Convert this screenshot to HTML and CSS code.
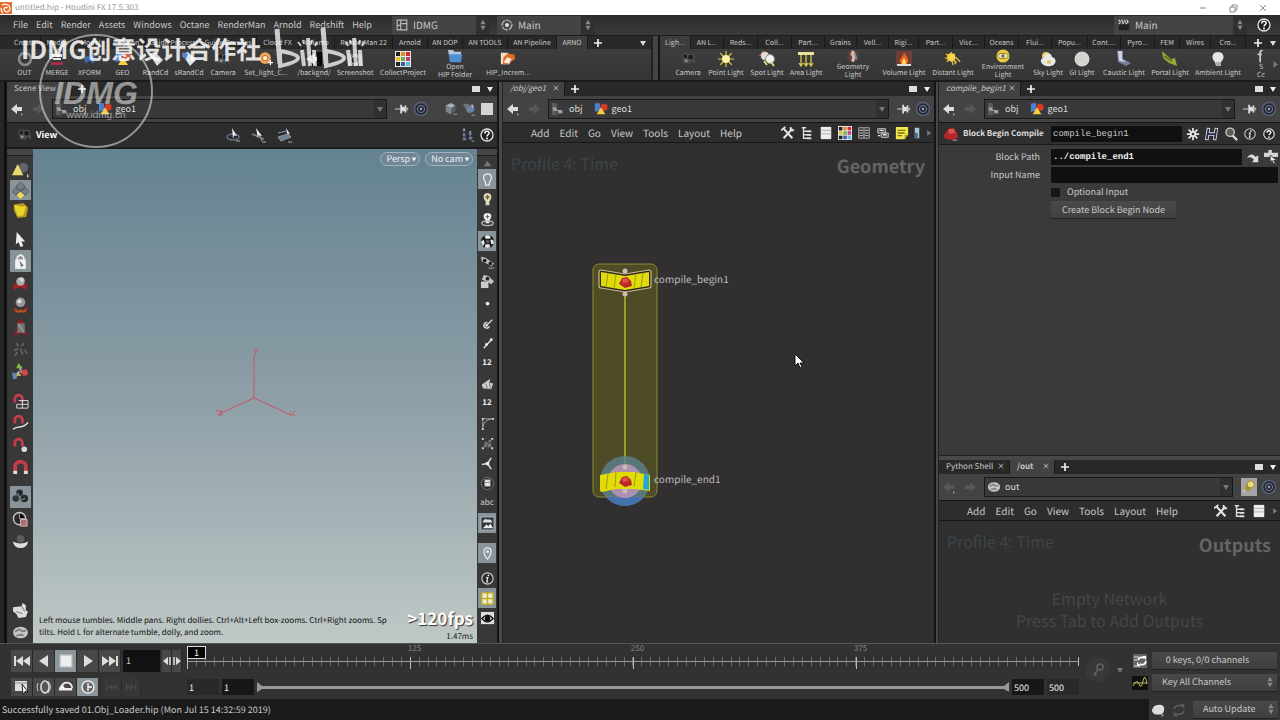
FILE: index.html
```
<!DOCTYPE html>
<html lang="en">
<head>
    <meta charset="UTF-8">
    <meta name="viewport" content="width=device-width, initial-scale=1.0">
    <title>untitled.hip - Houdini FX 17.5.303</title>
    <link rel="stylesheet" href="styles.css">
</head>
<body>
    <svg class="sprite" aria-hidden="true">
        <symbol id="logo" viewBox="0 0 12 12"><rect width="12" height="12" fill="#e8702f"/><path d="M2 3c4-2 8 0 8 3.500S6 11 4.500 8.500 6 4.500 7.500 6M1 6c0 2 1 4 2 5" fill="none" stroke="#fff" stroke-width="1.200"/></symbol>
        <symbol id="help" viewBox="0 0 16 16"><circle cx="8" cy="8" r="6" fill="#222" stroke="#e4e4e4" stroke-width="1.300"/><path d="M5.800 6.500c0-3 4.500-2.800 4.300-.3C10 7.800 8 7.600 8 9.500" fill="none" stroke="#fff" stroke-width="1.500"/><circle cx="8" cy="11.500" r="1" fill="#fff"/></symbol>
        <symbol id="info" viewBox="0 0 16 16"><circle cx="8" cy="8" r="6" fill="#2a2a2a" stroke="#ccc" stroke-width="1.200"/><path d="M6.500 7h1.800l-1 4.500h1.500" fill="none" stroke="#eee" stroke-width="1.300"/><circle cx="9" cy="4.700" r="1" fill="#eee"/></symbol>
        <symbol id="layout" viewBox="0 0 16 16"><path d="M2.500 2.500h11v11h-11zM6.500 2.500v11M2.500 8.500h4M6.500 6.500h7" fill="none" stroke="#bbb" stroke-width="1.300"/></symbol>
        <symbol id="target" viewBox="0 0 16 16"><circle cx="8" cy="8" r="5.500" fill="none" stroke="#bbb" stroke-width="1.300" stroke-dasharray="6 2.600"/><circle cx="8" cy="8" r="2.300" fill="#ddd"/><path d="M8 1v3M8 12v3M1 8h3M12 8h3" stroke="#bbb"/></symbol>
        <symbol id="clap" viewBox="0 0 16 16"><path d="M2 7h12v7H2z" fill="#222"/><path d="M2 2l2 3M5 2l2 3M8 2l2 3M11 2l2 3M2 7l2-2M6 7l2-2M10 7l2-2" stroke="#ddd" stroke-width="1.200"/></symbol>
        <symbol id="updown" viewBox="0 0 8 14"><path d="M4 1l3 5H1zM4 13l3-5H1z" fill="#888"/></symbol>
        <symbol id="plus" viewBox="0 0 10 10"><path d="M5 1v8M1 5h8" stroke="#eee" stroke-width="1.700"/></symbol>
        <symbol id="down" viewBox="0 0 10 10"><path d="M2 3h6L5 8z" fill="currentColor"/></symbol>
        <symbol id="right" viewBox="0 0 10 10"><path d="M3 1v8l6-4z" fill="currentColor"/></symbol>
        <symbol id="back" viewBox="0 0 16 16"><path d="M1 8l6-5v3h5v4H7v3z" fill="currentColor"/><path d="M11 12l2 1.500-2 1.500z" fill="#999"/></symbol>
        <symbol id="fwd" viewBox="0 0 16 16"><path d="M14 8L8 3v3H3v4h5v3z" fill="#575757"/></symbol>
        <symbol id="objnet" viewBox="0 0 16 16"><path d="M1 1h5l1 3v11H1z" fill="#5a5a5a"/><path d="M2 6h4v4H2zM8 9h5v4H8z" fill="#999"/><path d="M4 8l7 3" stroke="#bbb"/></symbol>
        <symbol id="geo" viewBox="0 0 16 16"><path d="M1 2c2-1 5-1 6 0v8l-6 1z" fill="#4b80cc"/><circle cx="11.500" cy="6" r="4" fill="#d83a25"/><path d="M8 6l5 8H3z" fill="#f3cf40"/></symbol>
        <symbol id="pin" viewBox="0 0 16 16"><path d="M0 8h6" stroke="#ddd"/><path d="M7 3v10M12 4v8" stroke="#ddd" stroke-width="2"/><path d="M7 5l5 1v4l-5 1z" fill="#ddd"/><path d="M12 8h3" stroke="#aaa" stroke-width="3"/></symbol>
        <symbol id="rings" viewBox="0 0 16 16"><circle cx="8" cy="8" r="6.500" fill="#23252e" stroke="#566078" stroke-width="1.500"/><circle cx="8" cy="8" r="3.600" fill="none" stroke="#7481a3"/><circle cx="8" cy="8" r="1.400" fill="#8592b5"/></symbol>
        <symbol id="cubes" viewBox="0 0 16 16"><path d="M2 4l6-3 5 3-5 3z" fill="#a8b0b8"/><path d="M2 4l6 3v7l-6-3z" fill="#7c858e"/><path d="M8 7l5-3v6l-5 4z" fill="#59616a"/><path d="M11 14h4" stroke="#aaa"/></symbol>
        <symbol id="bluecube" viewBox="0 0 16 16"><path d="M1 2h6l3 3v8l-4-1z" fill="#6b727c"/><circle cx="10" cy="8" r="4" fill="#6c83a8"/><path d="M10 3h3v5" fill="#b7bdc7"/><path d="M11 15h4" stroke="#aaa"/></symbol>
        <symbol id="flag" viewBox="0 0 14 14"><path d="M1 1h12v12H1z" fill="#d4d4d4"/></symbol>
        <symbol id="camera" viewBox="0 0 18 16"><circle cx="6" cy="5" r="3" fill="#222" stroke="#5d5d5d"/><circle cx="12" cy="6" r="3.500" fill="#1c1c1c" stroke="#666"/><path d="M3 8h9v5H4zM12 10l5-2v5z" fill="#4c4f52"/><circle cx="7" cy="10" r="1.500" fill="#999"/></symbol>
        <symbol id="orbit" viewBox="0 0 16 16"><ellipse cx="8" cy="10" rx="6" ry="3" fill="none" stroke="#65758a" stroke-width="1.500"/><path d="M7 1l5 8-3-.5L8 12z" fill="#e9e9e9"/><path d="M11 14h4" stroke="#aaa"/></symbol>
        <symbol id="pan" viewBox="0 0 16 16"><path d="M1 7l12 5M9 9l2 5" stroke="#7b8591" stroke-width="1.500"/><path d="M5 1l6 8-4-.5L7 12z" fill="#e9e9e9"/><path d="M11 15h4" stroke="#aaa"/></symbol>
        <symbol id="dolly" viewBox="0 0 16 16"><path d="M1 10l10-3 3 3-10 4zM1 6l8-2" fill="#708091" stroke="#8597a8"/><path d="M9 1l4 6-3-.5z" fill="#eee"/><path d="M11 15h4" stroke="#aaa"/></symbol>
        <symbol id="dots" viewBox="0 0 16 16"><path d="M2 2h3v2H2zM2 6h3v3H2zM2 11h4v3H2zM9 5h3v3H9zM9 10h4v3H9z" fill="#6578a8"/><path d="M3 1h1v1H3zM10 4h1v1h-1zM3 10h1M10 9h1" stroke="#ccc"/><path d="M12 15h3" stroke="#aaa"/></symbol>

        <symbol id="ring" viewBox="0 0 16 16"><circle cx="8" cy="8" r="6" fill="none" stroke="#8a8a8a" stroke-width="2.500"/></symbol>
        <symbol id="merge" viewBox="0 0 16 16"><path d="M3 3h10v3H3zM4 7h8v2H4z" fill="#e7e7e7"/><path d="M2 11h12v3H2z" fill="#9f3145"/></symbol>
        <symbol id="xform" viewBox="0 0 18 16"><path d="M2 7l5-3 2 3 4-4 3 5-4 5-3-3-5 3z" fill="#3e68a8"/></symbol>
        <symbol id="rand" viewBox="0 0 16 16"><path d="M1 3l6-2 8 8-6 6z" fill="#dadada"/><path d="M4 3l3 3 2-3" fill="#8c8c8c"/></symbol>
        <symbol id="srand" viewBox="0 0 16 16"><path d="M1 3l6-2 8 8-6 6z" fill="#dfe5ec"/><path d="M2 1l5 2-2 5-4-2z" fill="#4a86c8"/></symbol>
        <symbol id="setlight" viewBox="0 0 18 16"><circle cx="8" cy="7" r="6.500" fill="#f4a35c"/><circle cx="8" cy="7" r="3" fill="#fff0cf" stroke="#b65e24"/><path d="M14 9v6M11 12h6" stroke="#fff" stroke-width="1.300"/></symbol>
        <symbol id="bg" viewBox="0 0 16 16"><path d="M5 1h11v14H5z" fill="#090909"/><path d="M0 8l9-6v4h2v4H9v4z" fill="#ccc"/></symbol>
        <symbol id="shot" viewBox="0 0 16 16"><path d="M1 3h14v12H1z" fill="#787878"/><circle cx="8" cy="9" r="4" fill="#222" stroke="#aaa"/></symbol>
        <symbol id="palette" viewBox="0 0 16 16"><path d="M0 0h16v16H0z" fill="#e8e8e8"/><path d="M1 1h4v4H1zM1 11h4v4H1z" fill="#222"/><path d="M6 1h4v4H6z" fill="#e58b2a"/><path d="M11 1h4v4h-4z" fill="#d32c2c"/><path d="M1 6h4v4H1z" fill="#e5c237"/><path d="M6 6h4v4H6z" fill="#6bb643"/><path d="M11 6h4v4h-4z" fill="#bf3c88"/><path d="M6 11h4v4H6z" fill="#3a5da8"/><path d="M11 11h4v4h-4z" fill="#5fbad0"/></symbol>
        <symbol id="folder" viewBox="0 0 16 16"><path d="M0 1h6l1 2h8v4H1z" fill="#b4c6da"/><path d="M1 6h15l-1 9H2z" fill="#4f90d3"/></symbol>
        <symbol id="hip" viewBox="0 0 18 16"><path d="M1 1h7l3 2v11H1z" fill="#f1e1c9"/><path d="M4 6l4-4 8 1 1 5-8 6H3z" fill="#e56d26"/><path d="M4 12l4-6 5 2-3 5z" fill="#f8eee3"/></symbol>
        <symbol id="sun" viewBox="0 0 18 18"><path d="M9 0v18M0 9h18M2.500 2.500l13 13M15.500 2.500l-13 13" stroke="#dcc54e" stroke-width="1.300"/><circle cx="9" cy="9" r="4.500" fill="#fff2a4"/></symbol>
        <symbol id="spot" viewBox="0 0 16 16"><path d="M0 5l4-5 4 1 2 5" fill="#cb7942"/><circle cx="6" cy="5" r="4" fill="#ddd"/><circle cx="11" cy="8" r="4.500" fill="#f1f1ec" stroke="#888"/><path d="M5 10l3 4M12 11l3 4" stroke="#e8d76a" stroke-width="2"/></symbol>
        <symbol id="area" viewBox="0 0 16 16"><path d="M0 1h16v3H0z" fill="#eee4a0"/><path d="M3 4v10M8 4v10M13 4v10M1 12l2 3 2-3M6 12l2 3 2-3M11 12l2 3 2-3" stroke="#d9c751" fill="none" stroke-width="1.300"/></symbol>
        <symbol id="geolight" viewBox="0 0 16 16"><circle cx="8" cy="8" r="7" fill="#704d42" opacity=".5"/><path d="M7 1l3 2 1 6-2 6-3-1 1-5-2-3z" fill="#e1b49a"/><path d="M10 5l2 7" stroke="#6c8fc2" stroke-width="2"/></symbol>
        <symbol id="fire" viewBox="0 0 16 16"><path d="M0 0h16v14H0z" fill="#84422f" opacity=".7"/><path d="M8 1c1 4 5 5 4 10-1 4-7 4-8 0C3 7 8 6 8 1z" fill="#f06325"/><path d="M8 7c3 4 2 6 0 7-3-1-2-4 0-7z" fill="#ffe26b"/><path d="M1 14h14" stroke="#ddd" stroke-width="2"/></symbol>
        <symbol id="distant" viewBox="0 0 18 16"><path d="M1 2l12 10M7 0v11M0 7h12M2 11l9-9" stroke="#f1bc35" stroke-width="1.500"/><circle cx="7" cy="6" r="4.500" fill="#fad34b"/><path d="M10 8l2 6M12 6l5 5M8 10l1 5" stroke="#e0bf42" stroke-width="1.500"/></symbol>
        <symbol id="envl" viewBox="0 0 16 16"><circle cx="8" cy="8" r="7.500" fill="#e8c940"/><ellipse cx="8" cy="8" rx="6" ry="3" fill="#fff0a0" stroke="#8f7827"/><circle cx="8" cy="8" r="2" fill="#4e6f9c"/></symbol>
        <symbol id="sky" viewBox="0 0 16 16"><circle cx="6" cy="5" r="4" fill="#e8cf62"/><path d="M1 11a3 3 0 013-4 4 4 0 018-1 4 4 0 013 6c-2 5-12 4-14-1z" fill="#e8e8e8"/><circle cx="9" cy="11" r="2" fill="#e3c950"/></symbol>
        <symbol id="gi" viewBox="0 0 16 16"><circle cx="8" cy="8" r="7.500" fill="#d4d4d0"/></symbol>
        <symbol id="caustic" viewBox="0 0 16 16"><path d="M1 0h6v8l8 4-5 3-8-4z" fill="#767e98"/><path d="M2 0h4v8l4 3-7-1z" fill="#ccd2e5"/></symbol>
        <symbol id="portal" viewBox="0 0 16 16"><path d="M0 0l9 8 4-1 2 8-8-3-6-5z" fill="#95a936"/><path d="M2 5l8 5" stroke="#5f7327" stroke-width="2"/></symbol>
        <symbol id="bulb" viewBox="0 0 16 16"><path d="M5 11C0 6 3 1 8 1s8 5 3 10v4H6z" fill="currentColor"/><path d="M6 12h5M6 14h5" stroke="#777"/></symbol>
        <symbol id="cut" viewBox="0 0 8 16"><path d="M3 15V5q0-4 3-3M0 6h5" fill="none" stroke="#c8c8c8" stroke-width="2"/></symbol>

        <symbol id="shapes" viewBox="0 0 18 18"><circle cx="12" cy="6" r="5" fill="#63636c"/><path d="M6 2l6 12H0z" fill="#eadb6a"/><path d="M16 12v5l2-2z" fill="#ccc"/></symbol>
        <symbol id="diamond" viewBox="0 0 18 18"><path d="M9 0l5 5-5 4-5-4zM4 6l5 4-5 4-4-4zM14 6l4 4-4 4-5-4z" fill="#747f89" stroke="#4e565e"/><path d="M9 10l4 4-4 4-4-4z" fill="#eedc57"/></symbol>
        <symbol id="yellowcube" viewBox="0 0 18 18"><path d="M2 3l10-2 5 5-2 10-9 1-4-8z" fill="#b89b18"/><path d="M2 3l8 2 5-1-3 10-6 1z" fill="#e8d52f"/></symbol>
        <symbol id="cursor" viewBox="0 0 16 18"><path d="M4 1l9 10H9l2 5-3 1-2-5-3 2z" fill="#ededed"/></symbol>
        <symbol id="lock" viewBox="0 0 16 16"><path d="M3 6h10v9H3z" fill="#f1f1f1"/><path d="M5 7V4q3-4 6 0v3" fill="none" stroke="#f1f1f1" stroke-width="1.500"/><path d="M7 7l4 5-2 .5v2z" fill="#606870"/></symbol>
        <symbol id="move" viewBox="0 0 16 16"><path d="M1 9l6-1 8 1-2 5-5-3-6 3z" fill="#a72125"/><circle cx="8" cy="6" r="4" fill="#aaa"/><path d="M6 3l4-1 2 3-3 2z" fill="#d4d4d4"/></symbol>
        <symbol id="rotate" viewBox="0 0 16 16"><path d="M1 10l4 1-2 3zM14 9l-3 2 3 3z" fill="#a72125"/><path d="M3 12q3 3 5 1 4 2 5-1" fill="none" stroke="#bd5020" stroke-width="2"/><circle cx="8" cy="5" r="4.500" fill="#999"/><circle cx="7" cy="4" r="2" fill="#ddd"/></symbol>
        <symbol id="scale" viewBox="0 0 16 16"><path d="M8 0l4 4H4zM1 15l4-6 2 5zM15 15l-4-6-2 5z" fill="#971b22"/><path d="M5 4h7v9H5z" fill="#777"/><path d="M6 5l5 7" stroke="#aaa"/></symbol>
        <symbol id="dim" viewBox="0 0 16 16"><path d="M4 2l2 3M11 2L9 5M2 9l4-2M8 7l2 6M5 10l-2 4M12 8l2 4" stroke="#686868" stroke-width="1.500"/></symbol>
        <symbol id="handles" viewBox="0 0 16 16"><path d="M8 7V3M7 8l-4 4M8 8l5 2" stroke="#aaa" stroke-width="2"/><path d="M6 0l4 5H4z" fill="#7abf43"/><path d="M0 9l6 1-2 5H1z" fill="#6a83b5"/><circle cx="12" cy="9" r="3" fill="#cf4545"/><path d="M6 9l3 3H4z" fill="#d4c74e"/></symbol>
        <symbol id="magnet" viewBox="0 0 16 16"><path d="M3 14V7c0-6 10-6 10 0v7" fill="none" stroke="#c53b4a" stroke-width="3.500"/><path d="M1.200 11h3.600v3H1.200zM11.200 11h3.600v3h-3.600z" fill="#ddd"/></symbol>
        <symbol id="maggrid" viewBox="0 0 18 18"><path d="M3 10V6c0-5 8-5 8 0v4" fill="none" stroke="#c53b4a" stroke-width="3"/><path d="M7 8h10v8H5v-4M11 8v8M5 12h12" fill="none" stroke="#ddd"/></symbol>
        <symbol id="magcurve" viewBox="0 0 18 18"><path d="M3 9V5c0-5 8-5 8 0v4" fill="none" stroke="#c53b4a" stroke-width="3"/><path d="M1 15c7-5 9 1 16-7" fill="none" stroke="#ddd" stroke-width="1.500"/></symbol>
        <symbol id="magpoint" viewBox="0 0 18 18"><path d="M3 10V6c0-5 8-5 8 0v4" fill="none" stroke="#c53b4a" stroke-width="3"/><circle cx="13" cy="13" r="3" fill="#d7d7d7"/></symbol>
        <symbol id="rig" viewBox="0 0 18 18"><circle cx="8" cy="4" r="3.500" fill="#23282c"/><circle cx="4" cy="10" r="3.500" fill="#303539"/><circle cx="13" cy="10" r="4" fill="#252a2e"/><path d="M6 4l3 8 5-2" stroke="#777" fill="none" stroke-width="1.500"/></symbol>
        <symbol id="viewbox" viewBox="0 0 18 18"><circle cx="8" cy="8" r="6.500" fill="#292929" stroke="#c5c5c5" stroke-width="1.500"/><path d="M8 2v6h6" stroke="#aaa"/><path d="M9 9h7v7H9z" fill="#a57178" stroke="#ddb2b6"/></symbol>
        <symbol id="dish" viewBox="0 0 18 18"><circle cx="9" cy="6" r="4" fill="#5d5d5d"/><path d="M1 9q8 4 16 0-1 7-8 7T1 9z" fill="#dedede"/></symbol>
        <symbol id="hand" viewBox="0 0 16 16"><path d="M1 5l8-1 1-3 3 2v5l2 1-2 5-7 1-2-4-3-2z" fill="#ddd"/><path d="M9 4l3 5M4 9l6 2" stroke="#888"/></symbol>
        <symbol id="globe" viewBox="0 0 16 16"><ellipse cx="8" cy="8" rx="7" ry="5.500" fill="#c4c4c4"/><path d="M3 7l4-2 3 2 3-1M4 11l5-1 2 1" stroke="#777" fill="none" stroke-width="1.500"/></symbol>

        <symbol id="up" viewBox="0 0 16 16"><path d="M8 5l4 6H4z" fill="#777"/></symbol>
        <symbol id="lamp" viewBox="0 0 16 16"><path d="M6 11C2 6 4 2 8 2s6 4 2 9v3H6z" fill="none" stroke="#eee" stroke-width="1.200"/></symbol>
        <symbol id="lampplus" viewBox="0 0 16 16"><path d="M6 10C2 5 4 1 8 1s6 4 2 9v4H6z" fill="#e4ddb6"/><path d="M8 3v5M5.500 5.500h5" stroke="#65603f" stroke-width="1.500"/></symbol>
        <symbol id="lampring" viewBox="0 0 16 16"><path d="M6 9C2 4 4 1 8 1s6 3 2 8v3H6z" fill="#eee"/><path d="M8 3v4M6 5h4" stroke="#555"/><ellipse cx="8" cy="12" rx="6" ry="2.500" fill="none" stroke="#bbb" stroke-width="1.500"/></symbol>
        <symbol id="checker" viewBox="0 0 16 16"><circle cx="8" cy="8" r="7" fill="#17191a"/><path d="M5 2l3-1 3 1v3H6zM1 8l3-2 1 4-2 3zM11 6l3 0 1 4-3 1zM6 11h4l1 3-3 1-3-1z" fill="#e8e8e8"/><circle cx="8" cy="8" r="2" fill="#555"/></symbol>
        <symbol id="goggles" viewBox="0 0 16 16"><path d="M1 3l5 1 9 6-3 3-5-3-5-2z" fill="#b9c0c2"/><circle cx="5" cy="7" r="2" fill="#222"/><circle cx="11" cy="10" r="2" fill="#222"/><path d="M9 15h6" stroke="#aaa"/></symbol>
        <symbol id="gogglock" viewBox="0 0 16 16"><path d="M4 1l5 1 6 6-3 3-5-3-5-2z" fill="#c2c2c2"/><circle cx="8" cy="5" r="2" fill="#222"/><path d="M1 8h8v7H1z" fill="#ccc"/></symbol>
        <symbol id="dot" viewBox="0 0 16 16"><circle cx="8" cy="8" r="2" fill="#eee"/></symbol>
        <symbol id="normal" viewBox="0 0 16 16"><path d="M7 10l6-6" stroke="#ddd" stroke-width="1.500"/><path d="M8 7a3 3 0 102 4" fill="none" stroke="#ddd" stroke-width="1.500"/><circle cx="7" cy="10" r="1.500" fill="#ddd"/></symbol>
        <symbol id="vec" viewBox="0 0 16 16"><path d="M4 13l8-9" stroke="#ddd" stroke-width="1.500"/><circle cx="12" cy="4" r="1.500" fill="#eee"/><circle cx="7" cy="9" r="1.500" fill="#eee"/></symbol>
        <symbol id="prim" viewBox="0 0 16 16"><path d="M2 9l9-6-1 4 4 1-2 6-9-1z" fill="#ccc"/><path d="M6 8l2 5M10 7l1 7" stroke="#777"/></symbol>
        <symbol id="corner" viewBox="0 0 16 16"><path d="M3 14V3h11M3 12q1-7 9-9" fill="none" stroke="#aaa"/><path d="M2 2h2v2H2zM2 13h2v2H2zM13 2h2v2h-2z" fill="#ddd"/></symbol>
        <symbol id="lattice" viewBox="0 0 16 16"><path d="M2 2h2v2H2zM12 2h2v2h-2zM2 12h2v2H2zM12 12h2v2h-2z" fill="#ddd"/><path d="M5 6h3v3H5zM9 4h3v3H9zM8 8h4v4H8zM4 9h3v3H4z" fill="#777"/></symbol>
        <symbol id="tri" viewBox="0 0 16 16"><path d="M8 8l4-6M8 8L2 9M8 8l4 6" stroke="#ddd" stroke-width="1.500"/><circle cx="8" cy="8" r="2" fill="#eee"/></symbol>
        <symbol id="book" viewBox="0 0 16 16"><circle cx="8" cy="8" r="6.500" fill="#2a2a2a" stroke="#777"/><path d="M5 4h6v7H5zM5 7h6" fill="#eee" stroke="#888"/></symbol>
        <symbol id="image" viewBox="0 0 16 16"><path d="M1 1h14v14H1z" fill="#2f3538" stroke="#b4bcc0"/><path d="M3 13l4-4 2 2 2-3 3 5z" fill="#eee"/><path d="M3 6c2-4 4-3 5-2 4-1 5 1 5 3H3z" fill="#ddd"/></symbol>
        <symbol id="place" viewBox="0 0 16 16"><path d="M8 14C3 8 3 2 8 2s5 6 0 12z" fill="none" stroke="#eee" stroke-width="1.300"/><circle cx="8" cy="6" r="1.500" fill="#eee"/></symbol>
        <symbol id="quad" viewBox="0 0 16 16"><path d="M2 2h12v12H2z" fill="#eeebd0"/><path d="M2 2h12v12H2zM8 2v12M2 8h12" fill="none" stroke="#c4ac20" stroke-width="1.500"/></symbol>
        <symbol id="eye" viewBox="0 0 16 16"><path d="M1 1h14v13H1z" fill="#ddd"/><path d="M2 8q6-7 12 0-6 7-12 0z" fill="#eee" stroke="#111" stroke-width="1.500"/><circle cx="8" cy="8" r="3" fill="#111"/></symbol>

        <symbol id="tools" viewBox="0 0 16 16"><path d="M3 3l10 11M13 3L3 14" stroke="#e4e4e4" stroke-width="2.400"/><path d="M0 5l5-4M11 1v4h4" stroke="#e4e4e4" stroke-width="2" fill="none"/></symbol>
        <symbol id="tree" viewBox="0 0 16 16"><path d="M2 2h5M4 2v12h8M4 6h8M4 10h8" fill="none" stroke="#ddd" stroke-width="1.500"/><path d="M8 5h5v2H8zM8 9h5v2H8zM8 13h5v2H8z" fill="#ddd"/></symbol>
        <symbol id="list" viewBox="0 0 16 16"><path d="M2 1h12v14H2z" fill="#eee"/><path d="M2 5h12M2 9h12" stroke="#aaa"/></symbol>
        <symbol id="table" viewBox="0 0 16 16"><path d="M2 2h12v12H2zM8 2v12" fill="#333" stroke="#bbb"/><path d="M3 5h4M3 8h4M3 11h4M9 5h4M9 8h4M9 11h4" stroke="#ddd"/></symbol>
        <symbol id="cards" viewBox="0 0 16 16"><path d="M2 3h9v5H2zM6 8h8v5H6z" fill="#555" stroke="#ccc"/><path d="M4 5h5M8 10h4M2 11h3" stroke="#ddd" stroke-width="1.500"/></symbol>
        <symbol id="note" viewBox="0 0 16 16"><path d="M1 1h14v9l-4 5H1z" fill="#f3e84a"/><path d="M3 5h9M3 8h8M3 11h5" stroke="#806f1b" stroke-width="1.500"/><path d="M15 10h-4v5z" fill="#a99b30"/></symbol>
        <symbol id="stripe" viewBox="0 0 8 16"><path d="M1 1h6v14H1z" fill="#a9c4d4"/><path d="M1 8h4v7H1z" fill="#4d6e8b"/></symbol>
        <symbol id="redblock" viewBox="0 0 18 16"><path d="M1 9l5-7 6-1 4 6 1 5-5 3-7-1-4-2z" fill="#b3262b"/><path d="M6 3l6-1 2 5-7 1z" fill="#dc5552"/><path d="M11 15h5" stroke="#aaa"/></symbol>
        <symbol id="gear" viewBox="0 0 16 16"><path d="M8 1v14M1 8h14M3 3l10 10M13 3L3 13" stroke="#e6e6e6" stroke-width="2"/><circle cx="8" cy="8" r="3.500" fill="#e6e6e6"/><circle cx="8" cy="8" r="1.500" fill="#333"/></symbol>
        <symbol id="hbook" viewBox="0 0 16 16"><path d="M4 1L2 15M13 1l-2 14M3 8h9" fill="none" stroke="#dfe4f2" stroke-width="4"/><path d="M4 2L2 14M13 2l-2 12M3 8h9" fill="none" stroke="#252a49" stroke-width="2"/></symbol>
        <symbol id="search" viewBox="0 0 16 16"><circle cx="7" cy="6" r="4.800" fill="#5a5a5a" stroke="#ccc" stroke-width="1.500"/><path d="M10 10l5 5" stroke="#ddd" stroke-width="2.500"/></symbol>
        <symbol id="jump" viewBox="0 0 16 16"><path d="M1 9q5-7 10-1l3-2v8H7l2-3q-3-4-8-2z" fill="#ddd"/></symbol>
        <symbol id="picker" viewBox="0 0 16 16"><path d="M0 3h16v5H0zM5 0h4v3H5z" fill="#d3d3d3"/><path d="M7 6l8 6h-4l2 3-2 1-2-4-2 2z" fill="#eee" stroke="#333"/></symbol>
        <symbol id="goldpin" viewBox="0 0 16 16"><path d="M1 14l5-5" stroke="#eee"/><circle cx="7" cy="9" r="3.500" fill="#a8962c"/><circle cx="10" cy="5" r="4" fill="#eedf72" stroke="#8f802c"/></symbol>

        <symbol id="first" viewBox="0 0 18 12"><path d="M2 1v10" stroke="currentColor" stroke-width="2"/><path d="M10 1v10L3 6zM17 1v10l-7-5z" fill="currentColor"/></symbol>
        <symbol id="prev" viewBox="0 0 12 12"><path d="M10 0v12L1 6z" fill="currentColor"/></symbol>
        <symbol id="stop" viewBox="0 0 12 12"><path d="M1 1h10v10H1z" fill="#eee" stroke="#c3c8ca"/></symbol>
        <symbol id="play" viewBox="0 0 12 12"><path d="M2 0v12l9-6z" fill="currentColor"/></symbol>
        <symbol id="last" viewBox="0 0 18 12"><path d="M16 1v10" stroke="currentColor" stroke-width="2"/><path d="M1 1v10l7-5zM8 1v10l7-5z" fill="currentColor"/></symbol>
        <symbol id="stepb" viewBox="0 0 8 10"><path d="M5 1v8L0 5z" fill="#ddd"/><path d="M7 1v8" stroke="#ddd" stroke-width="1.500"/></symbol>
        <symbol id="stepf" viewBox="0 0 8 10"><path d="M3 1v8l5-4z" fill="#ddd"/><path d="M1 1v8" stroke="#ddd" stroke-width="1.500"/></symbol>
        <symbol id="scope" viewBox="0 0 16 16"><path d="M1 2h12v10H1z" fill="#ddd"/><path d="M1 4h12" stroke="#888"/><path d="M8 5l6 8-3-.5-2 3z" fill="#fff" stroke="#222"/></symbol>
        <symbol id="sound" viewBox="0 0 16 16"><ellipse cx="9" cy="8" rx="4" ry="6" fill="#555" stroke="#ddd" stroke-width="1.500"/><path d="M5 5v6M2 4q-2 4 0 8M12 2q5 6 0 12" stroke="#ccc" fill="none"/></symbol>
        <symbol id="loop" viewBox="0 0 18 16"><path d="M3 9q2-6 7-6t6 6" fill="none" stroke="#eee" stroke-width="2"/><path d="M1 12h15V9H8L5 5 1 9z" fill="#eee"/><path d="M7 9q3-3 6 0z" fill="#484848"/></symbol>
        <symbol id="clock" viewBox="0 0 16 16"><circle cx="8" cy="8" r="6" fill="#666" stroke="#eee" stroke-width="1.500"/><path d="M8 4v8M8 8h4" stroke="#fff" stroke-width="1.300"/></symbol>
        <symbol id="key" viewBox="0 0 16 16"><circle cx="10" cy="5" r="3" fill="none" stroke="#626262" stroke-width="1.500"/><path d="M8 7l-4 7M4 11l3 2" stroke="#626262" stroke-width="1.500"/></symbol>
        <symbol id="keycycle" viewBox="0 0 16 16"><path d="M1 1h14v14H1z" fill="#666"/><path d="M2 4h5M2 7h3M2 13h6" stroke="#ddd"/><path d="M6 7q2-4 6-2M14 8q-1 5-6 3" fill="none" stroke="#fff" stroke-width="1.800"/><path d="M10 3h4v4zM9 13H5V9z" fill="#fff"/></symbol>
        <symbol id="curve" viewBox="0 0 16 16"><path d="M0 1h16v14H0z" fill="#101010"/><path d="M1 8h14" stroke="#aaa"/><path d="M1 11q4-8 6-2t4-3 4 3" fill="none" stroke="#c9bd3b"/></symbol>
        <symbol id="brain" viewBox="0 0 16 16"><path d="M1 9q1-7 8-7t6 6-6 5q-6 1-8-4z" fill="#ddd"/><path d="M12 12l3 2-3 2z" fill="#999"/></symbol>
        <symbol id="refresh" viewBox="0 0 16 16"><path d="M2 7q3-6 9-3M14 9q-3 6-9 3" fill="none" stroke="#5a5a5a" stroke-width="2"/><path d="M9 1h5v6zM7 15H2V9z" fill="#5a5a5a"/></symbol>
    </svg>

    <header class="titlebar">
        <svg class="ic12"><use href="#logo"/></svg>
        <span>untitled.hip - Houdini FX 17.5.303</span>
        <div class="window-buttons">
            <button aria-label="Minimize"><svg viewBox="0 0 10 10"><path d="M2 5h6"/></svg></button>
            <button aria-label="Restore"><svg viewBox="0 0 10 10"><path d="M2 4h5v5H2zM4 4V2h5v5H7"/></svg></button>
            <button aria-label="Close"><svg viewBox="0 0 10 10"><path d="M2 2l6 6M8 2L2 8"/></svg></button>
        </div>
    </header>

    <nav class="menubar">
        <div class="menus">
            <button>File</button><button>Edit</button><button>Render</button><button>Assets</button><button>Windows</button><button>Octane</button><button>RenderMan</button><button>Arnold</button><button>Redshift</button><button>Help</button>
        </div>
        <label class="desk"><svg class="ic14"><use href="#layout"/></svg><select aria-label="Desktop"><option>IDMG</option></select><svg class="updown"><use href="#updown"/></svg></label>
        <label class="desk"><svg class="ic14"><use href="#target"/></svg><select aria-label="Radial menu"><option>Main</option></select><svg class="updown"><use href="#updown"/></svg></label>
        <label class="desk take"><svg class="ic14"><use href="#clap"/></svg><select aria-label="Take"><option>Main</option></select><svg class="updown"><use href="#updown"/></svg></label>
        <button class="plain" aria-label="Help"><svg class="ic16"><use href="#help"/></svg></button>
    </nav>

    <section class="shelves">
        <div class="shelf">
            <div class="shelf-tabs tabs-a">
                <button>Create</button><button>Modify</button><button>Model</button><button>Polygon</button><button>Guide Process</button><button>Guide Brushes</button><button>Cloud FX</button><button>Volume</button><button>RenderMan 22</button><button>Arnold</button><button>AN DOP</button><button>AN TOOLS</button><button>AN Pipeline</button><button class="on">ARNO</button>
                <button class="add" aria-label="Add shelf"><svg class="ic10"><use href="#plus"/></svg></button>
                <button class="end" aria-label="Shelf menu"><svg class="ic10"><use href="#down"/></svg></button>
            </div>
            <div class="shelf-tools tools-a">
                <button><svg><use href="#ring"/></svg>OUT</button>
                <button><svg><use href="#merge"/></svg>MERGE</button>
                <button><svg><use href="#xform"/></svg>XFORM</button>
                <button><svg><use href="#geo"/></svg>GEO</button>
                <button><svg><use href="#rand"/></svg>RandCd</button>
                <button><svg><use href="#srand"/></svg>sRandCd</button>
                <button><svg><use href="#camera"/></svg>Camera</button>
                <button><svg><use href="#setlight"/></svg>Set_light_C...</button>
                <button><svg><use href="#bg"/></svg>/backgnd/</button>
                <button><svg><use href="#shot"/></svg>Screenshot</button>
                <button><svg><use href="#palette"/></svg>CollectProject</button>
                <button class="two"><svg><use href="#folder"/></svg>Open<br>HIP Folder</button>
                <button><svg><use href="#hip"/></svg>HIP_Increm...</button>
            </div>
        </div>
        <div class="shelf-grip"></div>
        <div class="shelf">
            <div class="shelf-tabs tabs-b">
                <button class="on">Ligh...</button><button>AN L...</button><button>Reds...</button><button>Coll...</button><button>Part...</button><button>Grains</button><button>Vell...</button><button>Rigi...</button><button>Part...</button><button>Visc...</button><button>Oceans</button><button>Flui...</button><button>Popu...</button><button>Cont....</button><button>Pyro...</button><button>FEM</button><button>Wires</button><button>Cro...</button>
                <button class="add" aria-label="Add shelf"><svg class="ic10"><use href="#plus"/></svg></button>
                <button class="end" aria-label="Shelf menu"><svg class="ic10"><use href="#down"/></svg></button>
            </div>
            <div class="shelf-tools tools-b">
                <button><svg><use href="#camera"/></svg>Camera</button>
                <button><svg><use href="#sun"/></svg>Point Light</button>
                <button><svg><use href="#spot"/></svg>Spot Light</button>
                <button><svg><use href="#area"/></svg>Area Light</button>
                <button class="two"><svg><use href="#geolight"/></svg>Geometry<br>Light</button>
                <button><svg><use href="#fire"/></svg>Volume Light</button>
                <button><svg><use href="#distant"/></svg>Distant Light</button>
                <button class="two"><svg><use href="#envl"/></svg>Environment<br>Light</button>
                <button><svg><use href="#sky"/></svg>Sky Light</button>
                <button><svg><use href="#gi"/></svg>GI Light</button>
                <button><svg><use href="#caustic"/></svg>Caustic Light</button>
                <button><svg><use href="#portal"/></svg>Portal Light</button>
                <button><svg class="white"><use href="#bulb"/></svg>Ambient Light</button>
                <button class="two"><svg><use href="#cut"/></svg>S<br>Cc</button>
                <button class="more" aria-label="More tools"><svg><use href="#right"/></svg></button>
            </div>
        </div>
    </section>

    <main class="desktop">
        <section class="pane">
            <div class="pane-tabs">
                <button class="on scene-tab">Scene View</button>
                <button class="add" aria-label="Add tab"><svg class="ic10"><use href="#plus"/></svg></button>
                <span class="pane-ctl"><i></i><svg class="ic10"><use href="#down"/></svg></span>
            </div>
            <div class="pathbar">
                <button class="plain" aria-label="Back"><svg class="ic16"><use href="#back"/></svg></button>
                <button class="plain" aria-label="Forward"><svg class="ic16"><use href="#fwd"/></svg></button>
                <div class="path"><a href="#obj"><svg class="ic14"><use href="#objnet"/></svg>obj</a><a href="#geo1"><svg class="ic14"><use href="#geo"/></svg>geo1</a><button aria-label="Path history"><svg class="ic10"><use href="#down"/></svg></button></div>
                <button class="plain" aria-label="Pin"><svg class="ic14"><use href="#pin"/></svg></button>
                <button class="plain" aria-label="Link"><svg class="ic16"><use href="#rings"/></svg></button>
                <button class="plain gap" aria-label="Shading"><svg class="ic14"><use href="#cubes"/></svg></button>
                <button class="plain" aria-label="Objects"><svg class="ic14"><use href="#bluecube"/></svg></button>
                <button class="plain" aria-label="Layout"><svg class="ic14"><use href="#flag"/></svg></button>
            </div>
            <div class="viewbar">
                <svg class="ic16"><use href="#camera"/></svg><b>View</b>
                <div class="viewbar-mid">
                    <button class="plain" aria-label="Tumble"><svg class="ic16"><use href="#orbit"/></svg></button>
                    <button class="plain" aria-label="Pan"><svg class="ic16"><use href="#pan"/></svg></button>
                    <button class="plain" aria-label="Dolly"><svg class="ic16"><use href="#dolly"/></svg></button>
                </div>
                <button class="plain" aria-label="Options"><svg class="ic14"><use href="#dots"/></svg></button>
                <button class="plain" aria-label="Help"><svg class="ic16"><use href="#help"/></svg></button>
            </div>
            <div class="scene">
                <div class="tools-left">
                    <span class="strip"></span>
                    <button class="s20" aria-label="Objects"><svg><use href="#shapes"/></svg></button>
                    <button class="s20 on" aria-label="Components"><svg><use href="#diamond"/></svg></button>
                    <button class="s20" aria-label="Dynamics"><svg><use href="#yellowcube"/></svg></button>
                    <button class="sp" aria-label="Select"><svg><use href="#cursor"/></svg></button>
                    <button class="on" aria-label="Secure selection"><svg><use href="#lock"/></svg></button>
                    <button aria-label="Move"><svg><use href="#move"/></svg></button>
                    <button aria-label="Rotate"><svg><use href="#rotate"/></svg></button>
                    <button aria-label="Scale"><svg><use href="#scale"/></svg></button>
                    <button aria-label="Pose"><svg><use href="#dim"/></svg></button>
                    <button aria-label="Handles"><svg><use href="#handles"/></svg></button>
                    <button class="sp" aria-label="Grid snap"><svg><use href="#maggrid"/></svg></button>
                    <button aria-label="Curve snap"><svg><use href="#magcurve"/></svg></button>
                    <button aria-label="Point snap"><svg><use href="#magpoint"/></svg></button>
                    <button aria-label="Snap"><svg><use href="#magnet"/></svg></button>
                    <button class="sp on" aria-label="View tool"><svg><use href="#rig"/></svg></button>
                    <button aria-label="Render region"><svg><use href="#viewbox"/></svg></button>
                    <button aria-label="Flipbook"><svg><use href="#dish"/></svg></button>
                    <button class="push" aria-label="Inspect"><svg><use href="#hand"/></svg></button>
                    <button aria-label="Snapshot"><svg><use href="#globe"/></svg></button>
                </div>
                <div class="viewport">
                    <div class="view-menus"><button>Persp<svg class="ic10"><use href="#down"/></svg></button><button>No cam<svg class="ic10"><use href="#down"/></svg></button></div>
                    <svg class="axis" viewBox="0 0 82 72"><path d="M39 51V7M39 51L4 67M39 51l37 17" fill="none" stroke="#cc5360"/><path d="M39 1l2 4 2-4M41 5l-1 3M1 64h6l-4 4h5M75 64l5 5M80 64l-5 5" fill="none" stroke="#cc5360"/></svg>
                    <p class="hint">Left mouse tumbles. Middle pans. Right dollies. Ctrl+Alt+Left box-zooms. Ctrl+Right zooms. Sp<br>tilts. Hold L for alternate tumble, dolly, and zoom.</p>
                    <div class="fps">&gt;120fps</div>
                    <div class="ms">1.47ms</div>
                </div>
                <div class="tools-right">
                    <span class="strip"></span>
                    <button class="small" aria-label="Scroll up"><svg><use href="#up"/></svg></button>
                    <button class="on" aria-label="Lighting"><svg><use href="#lamp"/></svg></button>
                    <button aria-label="Headlight"><svg><use href="#lampplus"/></svg></button>
                    <button aria-label="Shadows"><svg><use href="#lampring"/></svg></button>
                    <button class="g2 on" aria-label="Materials"><svg><use href="#checker"/></svg></button>
                    <button aria-label="Display options"><svg><use href="#goggles"/></svg></button>
                    <button aria-label="Lock display"><svg><use href="#gogglock"/></svg></button>
                    <button class="g2" aria-label="Points"><svg><use href="#dot"/></svg></button>
                    <button aria-label="Point normals"><svg><use href="#normal"/></svg></button>
                    <button aria-label="Point trails"><svg><use href="#vec"/></svg></button>
                    <button aria-label="Point numbers"><b>12</b></button>
                    <button aria-label="Primitive normals"><svg><use href="#prim"/></svg></button>
                    <button aria-label="Primitive numbers"><b>12</b></button>
                    <button aria-label="Hulls"><svg><use href="#corner"/></svg></button>
                    <button aria-label="Lattice"><svg><use href="#lattice"/></svg></button>
                    <button aria-label="Vectors"><svg><use href="#tri"/></svg></button>
                    <button aria-label="Groups"><svg><use href="#book"/></svg></button>
                    <button>abc</button>
                    <button class="on" aria-label="Background"><svg><use href="#image"/></svg></button>
                    <button class="g10 on" aria-label="Origin"><svg><use href="#place"/></svg></button>
                    <button class="g5" aria-label="Info"><svg><use href="#info"/></svg></button>
                    <button class="on" aria-label="Grid"><svg><use href="#quad"/></svg></button>
                    <button aria-label="Visualize"><svg><use href="#eye"/></svg></button>
                </div>
            </div>
        </section>

        <div class="divider"></div>

        <section class="pane">
            <div class="pane-tabs">
                <button class="on w60"><em>/obj/geo1</em><span>×</span></button>
                <button class="add" aria-label="Add tab"><svg class="ic10"><use href="#plus"/></svg></button>
                <span class="pane-ctl"><i></i><svg class="ic10"><use href="#down"/></svg></span>
            </div>
            <div class="pathbar">
                <button class="plain" aria-label="Back"><svg class="ic16"><use href="#back"/></svg></button>
                <button class="plain" aria-label="Forward"><svg class="ic16"><use href="#fwd"/></svg></button>
                <div class="path"><a href="#obj"><svg class="ic14"><use href="#objnet"/></svg>obj</a><a href="#geo1"><svg class="ic14"><use href="#geo"/></svg>geo1</a><button aria-label="Path history"><svg class="ic10"><use href="#down"/></svg></button></div>
                <button class="plain" aria-label="Pin"><svg class="ic14"><use href="#pin"/></svg></button>
                <button class="plain" aria-label="Link"><svg class="ic16"><use href="#rings"/></svg></button>
            </div>
            <div class="netmenu">
                <button>Add</button><button>Edit</button><button>Go</button><button>View</button><button>Tools</button><button>Layout</button><button>Help</button>
                <div class="net-icons">
                    <svg class="ic14"><use href="#tools"/></svg><svg class="ic14"><use href="#tree"/></svg><svg class="ic14"><use href="#list"/></svg><svg class="ic14"><use href="#palette"/></svg><svg class="ic14"><use href="#table"/></svg><svg class="ic14"><use href="#cards"/></svg><svg class="ic14"><use href="#note"/></svg><svg class="thin"><use href="#stripe"/></svg><svg class="arrow"><use href="#right"/></svg>
                </div>
            </div>
            <div class="network">
                <span class="profile">Profile 4: Time</span>
                <span class="context">Geometry</span>
                <svg class="graph" viewBox="0 0 70 248">
                    <rect x="3" y="3" width="64" height="233" rx="6" fill="#4e4c27" stroke="#8b8d2c"/>
                    <path d="M35 33v172" stroke="#b7b92e" stroke-width="1.500"/>
                    <circle cx="35" cy="220" r="25" fill="#5d8291" opacity=".8"/>
                    <path d="M16 236h38a25 25 0 01-38 0z" fill="#4571b0"/>
                    <circle cx="35" cy="220" r="17" fill="#ad8fae"/>
                    <path d="M11 9l24 4 24-4q2 0 2 2v14q0 2-2 2l-24 4-24-4q-2 0-2-2V11q0-2 2-2z" fill="#2f2c20" stroke="#d3b88d" stroke-width="1.200"/>
                    <path d="M11 11l24 4 24-4v14l-24 4-24-4z" fill="#e1dc08"/>
                    <path d="M18 12l-2 14M26 14l-2 13M46 13l-2 14M53 12l-2 14" stroke="#9c9b12"/>
                    <path d="M10 214l16-3h18l16 3v16l-16-2H26l-14 3q-2 0-2-2z" fill="#e1dc08"/>
                    <path d="M18 212l-2 16M26 211l-1 15M46 211l-2 15" stroke="#9c9b12"/>
                    <path d="M54 213l5 1v15l-6-1z" fill="#23a7d4"/>
                    <path d="M29 23l3-6 5-1 4 4 1 5-7 2zM29 222l3-6 5-1 4 4 1 5-7 2z" fill="#b8272a"/>
                    <path d="M32 18l5-1 2 4-6 1zM32 217l5-1 2 4-6 1z" fill="#df5146"/>
                    <g fill="#c9bdb7"><circle cx="35" cy="10" r="2.500"/><circle cx="35" cy="33" r="2.500"/><circle cx="35" cy="206" r="2.500"/><circle cx="35" cy="230" r="2.500"/></g>
                </svg>
                <span class="node-name begin">compile_begin1</span>
                <span class="node-name finish">compile_end1</span>
                <svg class="pointer" viewBox="0 0 10 16"><path d="M1 1v12l3-3 2 5 2-1-2-4h4z" fill="#fff" stroke="#111"/></svg>
            </div>
        </section>

        <div class="divider"></div>

        <div class="right-col">
            <section class="pane params">
                <div class="pane-tabs">
                    <button class="on w80"><em>compile_begin1</em><span>×</span></button>
                    <button class="add" aria-label="Add tab"><svg class="ic10"><use href="#plus"/></svg></button>
                    <span class="pane-ctl"><i></i><svg class="ic10"><use href="#down"/></svg></span>
                </div>
                <div class="pathbar">
                    <button class="plain" aria-label="Back"><svg class="ic16"><use href="#back"/></svg></button>
                    <button class="plain" aria-label="Forward"><svg class="ic16"><use href="#fwd"/></svg></button>
                    <div class="path"><a href="#obj"><svg class="ic14"><use href="#objnet"/></svg>obj</a><a href="#geo1"><svg class="ic14"><use href="#geo"/></svg>geo1</a><button aria-label="Path history"><svg class="ic10"><use href="#down"/></svg></button></div>
                    <button class="plain" aria-label="Pin"><svg class="ic14"><use href="#pin"/></svg></button>
                    <button class="plain" aria-label="Link"><svg class="ic16"><use href="#rings"/></svg></button>
                </div>
                <div class="param-head">
                    <svg class="ic16"><use href="#redblock"/></svg>
                    <label for="node-name">Block Begin Compile</label>
                    <input id="node-name" value="compile_begin1">
                    <div class="head-icons">
                        <button class="plain" aria-label="Settings"><svg class="ic14"><use href="#gear"/></svg></button>
                        <button class="plain" aria-label="Houdini"><svg class="ic14"><use href="#hbook"/></svg></button>
                        <button class="plain" aria-label="Search"><svg class="ic14"><use href="#search"/></svg></button>
                        <button class="plain" aria-label="Info"><svg class="ic14"><use href="#info"/></svg></button>
                        <button class="plain" aria-label="Help"><svg class="ic14"><use href="#help"/></svg></button>
                    </div>
                </div>
                <form class="param-form">
                    <label for="block-path">Block Path</label>
                    <div class="field"><input id="block-path" class="bold" value="../compile_end1"><svg class="ic14"><use href="#jump"/></svg><svg class="ic14"><use href="#picker"/></svg></div>
                    <label for="input-name">Input Name</label>
                    <div class="field"><input id="input-name" value=""></div>
                    <span></span>
                    <label class="check"><input type="checkbox">Optional Input</label>
                    <span></span>
                    <button type="button" class="create">Create Block Begin Node</button>
                </form>
            </section>
            <div class="hdivider"></div>
            <section class="pane outputs">
                <div class="pane-tabs">
                    <button class="w70">Python Shell<span>×</span></button>
                    <button class="on w45"><b>/out</b><span>×</span></button>
                    <button class="add" aria-label="Add tab"><svg class="ic10"><use href="#plus"/></svg></button>
                    <span class="pane-ctl"><i></i><svg class="ic10"><use href="#down"/></svg></span>
                </div>
                <div class="pathbar">
                    <button class="plain dimmed" aria-label="Back"><svg class="ic16"><use href="#back"/></svg></button>
                    <button class="plain" aria-label="Forward"><svg class="ic16"><use href="#fwd"/></svg></button>
                    <div class="path"><a href="#out"><svg class="ic14"><use href="#globe"/></svg>out</a><button aria-label="Path history"><svg class="ic10"><use href="#down"/></svg></button></div>
                    <button class="plain pinned" aria-label="Pin"><svg class="ic14"><use href="#goldpin"/></svg></button>
                    <button class="plain" aria-label="Link"><svg class="ic16"><use href="#rings"/></svg></button>
                </div>
                <div class="netmenu">
                    <button>Add</button><button>Edit</button><button>Go</button><button>View</button><button>Tools</button><button>Layout</button><button>Help</button>
                    <div class="net-icons"><svg class="ic14"><use href="#tools"/></svg><svg class="ic14"><use href="#tree"/></svg><svg class="ic14"><use href="#list"/></svg><svg class="arrow"><use href="#right"/></svg></div>
                </div>
                <div class="network">
                    <span class="profile">Profile 4: Time</span>
                    <span class="context">Outputs</span>
                    <p class="empty">Empty Network<br>Press Tab to Add Outputs</p>
                </div>
            </section>
        </div>
    </main>

    <section class="timeline">
        <div class="transport">
            <div class="btns">
                <button aria-label="First frame"><svg class="wide"><use href="#first"/></svg></button>
                <button aria-label="Play backward"><svg class="ic12"><use href="#prev"/></svg></button>
                <button class="on" aria-label="Stop"><svg class="ic14"><use href="#stop"/></svg></button>
                <button aria-label="Play"><svg class="ic12"><use href="#play"/></svg></button>
                <button aria-label="Last frame"><svg class="wide"><use href="#last"/></svg></button>
                <input class="frame" value="1" aria-label="Current frame">
                <button class="step" aria-label="Step back"><svg class="thin"><use href="#stepb"/></svg></button>
                <button class="step" aria-label="Step forward"><svg class="thin"><use href="#stepf"/></svg></button>
            </div>
            <div class="btns low">
                <button aria-label="Scope"><svg class="ic16"><use href="#scope"/></svg></button>
                <button aria-label="Audio"><svg class="ic16"><use href="#sound"/></svg></button>
                <button aria-label="Loop"><svg class="ic16"><use href="#loop"/></svg></button>
                <button class="on" aria-label="Real time"><svg class="ic16"><use href="#clock"/></svg></button>
                <button class="off" aria-label="Previous key" disabled><svg class="ic12"><use href="#first"/></svg></button>
                <button class="off" aria-label="Next key" disabled><svg class="ic12"><use href="#last"/></svg></button>
            </div>
        </div>
        <div class="track">
            <div class="ruler">
                <div class="ticks"></div>
                <div class="majors"></div>
                <span class="mark m1">125</span><span class="mark m2">250</span><span class="mark m3">375</span>
                <span class="now">1</span>
            </div>
            <div class="range">
                <input value="1" aria-label="Global start">
                <input class="dark" value="1" aria-label="Range start">
                <div class="bar"></div>
                <input class="dark" value="500" aria-label="Range end">
                <input value="500" aria-label="Global end">
            </div>
        </div>
        <div class="keyctl">
            <button class="keybtn" aria-label="Set key"><svg class="ic16"><use href="#key"/></svg></button>
            <button class="plain" aria-label="Key menu"><svg class="ic10"><use href="#down"/></svg></button>
        </div>
        <div class="channels">
            <svg class="ic16"><use href="#keycycle"/></svg>
            <button>0 keys, 0/0 channels</button>
            <svg class="ic16"><use href="#curve"/></svg>
            <label class="sel"><select aria-label="Key mode"><option>Key All Channels</option></select><svg class="updown"><use href="#updown"/></svg></label>
        </div>
    </section>

    <footer class="status">
        <span>Successfully saved 01.Obj_Loader.hip (Mon Jul 15 14:32:59 2019)</span>
        <div class="update">
            <svg class="ic14"><use href="#brain"/></svg><svg class="ic14"><use href="#refresh"/></svg>
            <label class="sel"><select aria-label="Update mode"><option>Auto Update</option></select><svg class="updown"><use href="#updown"/></svg></label>
        </div>
    </footer>

    <div class="watermark">
        <div class="wm-title">IDMG创意设计合作社</div>
        <div class="wm-badge"><strong>IDMG</strong><span>www.idmg.cn</span></div>
        <svg class="wm-bili" viewBox="0 0 92 44" fill="none" stroke="#fff"><path d="M3 2l3 35M49 1l3 36" stroke-width="5"/><path d="M6 24q18 3 18 7t-18 8zM52 24q18 3 18 7t-18 8z" stroke-width="4"/><path d="M28 23l2 16M34 11l2 28M40 23l1 16M74 23l2 16M80 11l2 28M86 23l1 16" stroke-width="4"/><path d="M24 15l3 4M29 13l1 4M38 13l-1 4M43 15l-2 4M72 15l2 4M76 13l1 4M86 13l-1 4M90 15l-2 4" stroke-width="2"/></svg>
    </div>
</body>
</html>
```
FILE: styles.css
```
* { box-sizing: border-box; }

body {
    margin: 0;
    min-height: 100vh;
    display: flex;
    flex-direction: column;
    position: relative;
    overflow: hidden;
    background: #2b2b2b;
    color: #c8c8c8;
    font-family: 'Noto Sans CJK SC', 'Noto Sans', sans-serif;
    font-size: 9px;
    line-height: 14px;
    text-rendering: geometricPrecision;
}

button, input, select {
    font: inherit;
    color: inherit;
    background: none;
    border: 0;
    border-radius: 0;
    padding: 0;
    margin: 0;
    outline: 0;
    text-rendering: inherit;
}
select { appearance: none; flex: 1; min-width: 0; }
input { min-width: 0; }
a { color: inherit; text-decoration: none; }
svg { display: block; flex: none; }
button { white-space: nowrap; }

.sprite { position: absolute; width: 0; height: 0; }
.ic10 { width: 10px; height: 10px; }
.ic12 { width: 12px; height: 12px; }
.ic14 { width: 14px; height: 14px; }
.ic16 { width: 16px; height: 16px; }
.arrow { width: 7px; height: 8px; }
.thin { width: 8px; height: 14px; }
.wide { width: 18px; height: 12px; }
.updown { width: 8px; height: 12px; }
.plain { display: flex; color: #ddd; }
.plain.dimmed { color: #575757; }

/* title bar */
.titlebar {
    height: 15px;
    display: flex;
    align-items: center;
    gap: 3px;
    background: #fff;
    color: #999;
    font-size: 8px;
}
.window-buttons { margin-left: auto; display: flex; gap: 20px; padding-right: 12px; }
.window-buttons svg { width: 10px; height: 10px; fill: none; stroke: #888; }

/* main menu */
.menubar {
    height: 21px;
    display: flex;
    align-items: center;
    padding-right: 8px;
    background: linear-gradient(#2c2c2c, #3a3a3a);
    border-bottom: 1px solid #1c1c1c;
}
.menus { display: flex; gap: 8px; width: 392px; padding-left: 13px; }
.desk {
    display: flex;
    align-items: center;
    gap: 4px;
    width: 98px;
    height: 19px;
    margin-right: 7px;
    padding: 0 3px;
    background: linear-gradient(90deg, #444 84px, #303030 84px);
    font-size: 10px;
}
.desk.take { width: 133px; margin: 0 9px 0 auto; background: linear-gradient(90deg, #444 119px, #303030 119px); }

/* shelves */
.shelves {
    height: 46px;
    display: grid;
    grid-template-columns: 651fr 9px 620fr;
    font-size: 7px;
    border-bottom: 2px solid #1b1b1b;
    overflow: hidden;
}
.shelf { background: #3d3d3d; min-width: 0; overflow: hidden; }
.shelf-tabs { display: grid; height: 13px; background: #292929; line-height: 12px; }
.shelf-tabs button { border-right: 1px solid #191919; overflow: hidden; }
.shelf-tabs .on { background: #3d3d3d; }
.shelf-tabs .add, .shelf-tabs .end { border: 0; display: grid; place-items: center; color: #ddd; }
.shelf-tabs .end { justify-content: end; }
.tabs-a { padding: 0 3px 0 9px; grid-template-columns: 32px 34px 32px 39px 54px 57px 42px 36px 58px 35px 35px 45px 49px 31px 20px 1fr; }
.tabs-b { padding-right: 2px; grid-template-columns: 31px 33px 34px 34px 33px 32px 32px 30px 34px 32px 34px 33px 36px 33px 34px 25px 31px 35px 24px 1fr; }
.shelf-tools { display: grid; height: 31px; background: linear-gradient(#3d3d3d, #353535); }
.shelf-tools button {
    display: flex;
    flex-direction: column;
    align-items: center;
    min-width: 0;
    padding-top: 2px;
    line-height: 13px;
}
.shelf-tools svg { width: 16px; height: 16px; }
.shelf-tools .white { color: #e5e5e5; }
.shelf-tools .two { line-height: 8px; padding: 0; }
.shelf-tools .two svg { height: 14px; }
.shelf-tools .more { padding-top: 11px; color: #777; }
.shelf-tools .more svg { width: 8px; height: 9px; }
.tools-a { padding-left: 8px; grid-template-columns: 33px 32px 33px 33px 33px 34px 34px 52px 44px 38px 58px 46px 60px; }
.tools-b { padding-left: 8px; grid-template-columns: 40px 36px 46px 32px 62px 40px 58px 42px 48px 20px 64px 28px 68px 18px 1fr; }
.shelf-grip { background: #444; border-right: 2px solid #151515; border-left: 2px solid #222; }

/* desktop panes */
.desktop {
    flex: 1;
    min-height: 0;
    display: grid;
    grid-template-columns: 490fr 6px 431fr 5px 341fr;
    padding-left: 7px;
    background: linear-gradient(90deg, #262626 4px, #111 4px);
}
.divider { background: #484848; border-left: 2px solid #151515; border-right: 1px solid #222; }
.pane { display: flex; flex-direction: column; min-width: 0; background: #3a3a3a; }
.pane-tabs {
    height: 14px;
    display: flex;
    background: #292929;
    font-size: 8px;
    line-height: 13px;
}
.pane-tabs button { display: flex; justify-content: space-between; padding: 0 4px 0 7px; border-right: 1px solid #1a1a1a; }
.pane-tabs .on { background: #424242; }
.pane-tabs .add { border: 0; padding: 2px 5px; }
.scene-tab { width: 65px; }
.w60 { width: 62px; }
.w80 { width: 82px; }
.w70 { width: 71px; }
.w45 { width: 45px; }
.pane-ctl { display: flex; align-items: center; gap: 5px; margin-left: auto; padding-right: 2px; color: #eee; }
.pane-ctl i { width: 8px; height: 6px; background: #ddd; }
.pathbar {
    height: 27px;
    display: flex;
    align-items: center;
    gap: 4px;
    padding: 0 3px;
    background: #434343;
    border-bottom: 1px solid #151515;
}
.path {
    flex: 1;
    height: 20px;
    display: flex;
    align-items: center;
    margin: 0 4px 0 2px;
    background: #393939;
    border: 1px solid #191919;
    color: #ddd;
}
.path a { display: flex; align-items: center; gap: 4px; padding: 0 9px 0 2px; }
.path button { margin-left: auto; padding: 4px 1px; color: #777; background: #303030; }
.gap { margin-left: 11px; }
.pinned { padding: 2px 1px; background: #a4a4a4; }
.viewbar { height: 26px; display: flex; align-items: center; gap: 4px; padding: 0 2px 0 9px; background: #2d2d2d; border-bottom: 2px solid #1c1c1c; color: #fff; }
.viewbar-mid { display: flex; gap: 10px; margin: 0 auto; }

/* scene view */
.scene { flex: 1; min-height: 0; display: flex; background: #383838; }
.tools-left { width: 26px; display: flex; flex-direction: column; align-items: center; }
.tools-left button { height: 22px; width: 21px; display: grid; place-items: center; }
.tools-left button.s20 { height: 20px; }
.tools-left svg { width: 17px; height: 17px; }
.tools-left .s20:nth-child(2) { margin-top: 4px; }
.tools-left .sp { margin-top: 8px; }
.tools-left .push { margin-top: auto; }
.tools-left .on, .tools-right .on { background: #89939a; }
.strip { height: 7px; width: 100%; background: #454545; border-bottom: 1px solid #1c1c1c; }
.tools-right { width: 20px; display: flex; flex-direction: column; align-items: center; }
.tools-right button { height: 20px; width: 18px; flex: none; display: grid; place-items: center; color: #ccc; font-size: 8px; }
.tools-right svg { width: 15px; height: 15px; }
.tools-right .small { height: 13px; }
.tools-right .g2 { margin-top: 2px; }
.tools-right .g5 { margin-top: 5px; }
.tools-right .g10 { margin-top: 10px; }
.tools-right b { color: #eee; }
.viewport {
    flex: 1;
    position: relative;
    background: linear-gradient(#648290, #8fa0a8 52%, #bfc8c6);
}
.view-menus { display: flex; justify-content: flex-end; gap: 5px; padding: 3px 4px 0; }
.view-menus button { display: flex; align-items: center; height: 14px; padding: 0 1px 0 5px; color: #eee; border: 1px solid #a3b2ba; border-radius: 7px; background: #6f8795; line-height: 12px; }
.view-menus svg { width: 8px; height: 8px; }
.axis { position: absolute; width: 82px; height: 72px; left: 41%; top: 40%; }
.hint { position: absolute; left: 6px; bottom: 4px; margin: 0; color: #111; font-size: 8px; line-height: 12px; white-space: nowrap; }
.fps { position: absolute; right: 4px; bottom: 15px; color: #fff; font-size: 17px; line-height: 20px; font-weight: 700; text-shadow: 1px 1px 1px #333; }
.ms { position: absolute; right: 4px; bottom: 0; color: #222; font-size: 8px; line-height: 12px; }

/* network editors */
.netmenu {
    height: 20px;
    display: flex;
    align-items: center;
    gap: 10px;
    padding: 0 2px 0 28px;
    background: #2d2d2d;
    border-bottom: 1px solid #171717;
    font-size: 10px;
}
.net-icons { display: flex; align-items: center; gap: 5px; margin-left: auto; color: #777; }
.net-icons .thin { width: 6px; }
.network { flex: 1; position: relative; background: #312f30; overflow: hidden; }
.profile { position: absolute; left: 8px; top: 8px; font-size: 16px; line-height: 24px; color: #3a4649; }
.context { position: absolute; right: 9px; top: 11px; font-size: 18px; line-height: 24px; font-weight: 700; color: #656565; }
.graph { position: absolute; left: 87px; top: 118px; width: 70px; height: 248px; }
.node-name { position: absolute; left: 151px; font-size: 10px; line-height: 16px; color: #bdbdbd; }
.begin { top: 128px; }
.finish { top: 328px; }
.pointer { position: absolute; left: 291px; top: 210px; width: 10px; height: 16px; }

/* parameters */
.right-col { display: flex; flex-direction: column; min-width: 0; }
.params { flex: 374; }
.outputs { flex: 183; }
.hdivider { height: 5px; background: #484848; border-top: 1px solid #222; }
.param-head { height: 22px; display: flex; align-items: center; gap: 4px; padding: 0 4px; background: #2f2f2f; border-bottom: 1px solid #1a1a1a; }
.param-head label { font-size: 8px; font-weight: 700; width: 84px; white-space: nowrap; color: #ddd; }
.param-head input { flex: 1; background: #101010; }
.param-head input, .field input { height: 16px; padding: 0 2px; font-family: 'Liberation Mono', 'DejaVu Sans Mono', monospace; font-size: 9px; }
.head-icons { display: flex; gap: 5px; }
.param-form {
    display: grid;
    grid-template-columns: 101px 1fr;
    gap: 2px 11px;
    padding: 4px 2px 0 0;
    align-items: center;
}
.param-form > label:not(.check) { text-align: right; }
.field { display: flex; align-items: center; gap: 4px; }
.field input { flex: 1; background: #101010; }
.field .bold { font-weight: 700; color: #eee; }
.check { display: flex; align-items: center; gap: 7px; }
.check input { appearance: none; width: 9px; height: 9px; background: #161616; }
.create { justify-self: start; width: 125px; height: 18px; background: linear-gradient(#4a4a4a, #404040); border-bottom: 1px solid #222; }
.outputs .context { top: 12px; }
.empty { margin: 66px 0 0; text-align: center; font-size: 16px; line-height: 22px; color: #464646; }

/* playbar */
.timeline {
    height: 56px;
    display: flex;
    padding: 0 3px 0 11px;
    background: #323232;
    border-top: 1px solid #555;
}
.transport { width: 176px; padding-top: 6px; }
.btns { display: flex; height: 22px; }
.btns button { width: 22px; display: grid; place-items: center; background: #484848; border-right: 1px solid #292929; color: #ddd; }
.btns .on { background: #8c979c; }
.btns .frame { width: 37px; margin: 0 2px; padding: 0 3px; background: #111; }
.btns button.step { width: 10px; }
.btns.low { height: 18px; margin-top: 6px; }
.btns button.off { width: 19px; background: #363636; color: #484848; }
.btns .off:nth-child(5) { margin-left: 4px; }
.track { flex: 1; }
.ruler { position: relative; height: 34px; }
.ticks, .majors { height: 9px; }
.ticks { position: absolute; inset: 13px 0 auto; background: linear-gradient(#999, #999) 0 4px / 100% 1px no-repeat, repeating-linear-gradient(90deg, #6c6c6c 0 1px, transparent 1px 1%); border-right: 1px solid #bbb; }
.majors { position: absolute; inset: 13px 0 auto; height: 12px; background: repeating-linear-gradient(90deg, #bbb 0 1px, transparent 1px 25%); }
.mark { position: absolute; top: -1px; width: 30px; margin-left: -15px; text-align: center; font-size: 8px; line-height: 12px; color: #888; }
.m1 { left: 25.500%; }
.m2 { left: 50.500%; }
.m3 { left: 75.500%; }
.now { position: absolute; left: 0; top: 2px; width: 19px; height: 13px; border: 1px solid #ddd; background: #080808; color: #eee; line-height: 11px; text-align: center; }
.range { display: flex; align-items: center; gap: 3px; height: 18px; }
.range input { width: 32px; height: 16px; padding: 0 2px; background: #292929; color: #eee; }
.range .dark { background: #171717; }
.bar { flex: 1; height: 10px; background: #999; clip-path: polygon(0 0, 5px 4px, calc(100% - 5px) 4px, 100% 0, 100% 100%, calc(100% - 5px) 7px, 5px 7px, 0 100%); }
.keyctl { width: 50px; display: flex; align-items: center; gap: 5px; padding: 0 0 4px 6px; }
.keyctl .plain { color: #777; }
.keybtn { width: 25px; height: 25px; border-radius: 50%; background: #383838; display: grid; place-items: center; }
.channels { width: 145px; display: grid; grid-template-columns: 16px 1fr; gap: 4px; align-content: center; align-items: center; margin-left: 3px; }
.channels button, .sel { height: 18px; background: linear-gradient(#494949, #3f3f3f); border-bottom: 1px solid #222; }
.channels button { padding-right: 14px; }
.sel { display: flex; align-items: center; padding: 0 3px 0 10px; }

.status {
    height: 21px;
    display: flex;
    align-items: center;
    justify-content: space-between;
    padding-left: 2px;
    background: #1a1a1a;
}
.update { width: 131px; height: 100%; display: flex; align-items: center; gap: 7px; padding: 0 2px; background: #353535; }
.update .sel { flex: 1; }

/* stamp laid over the capture */
.watermark { position: absolute; inset: 0; pointer-events: none; color: #fff; }
.wm-title { position: absolute; left: 21px; top: 32px; font-size: 25px; line-height: 34px; font-weight: 700; opacity: .85; white-space: nowrap; }
.wm-badge { position: absolute; left: 39px; top: 34px; width: 114px; height: 114px; border: 2px solid #fff; border-radius: 50%; opacity: .5; text-align: center; font-family: 'Liberation Sans', sans-serif; }
.wm-badge strong { display: block; margin-top: 39px; font-size: 32px; line-height: 36px; font-style: italic; font-weight: 700; }
.wm-badge span { display: block; font-size: 10px; line-height: 10px; }
.wm-bili { position: absolute; left: 274px; top: 27px; width: 92px; height: 44px; opacity: .75; }
```
